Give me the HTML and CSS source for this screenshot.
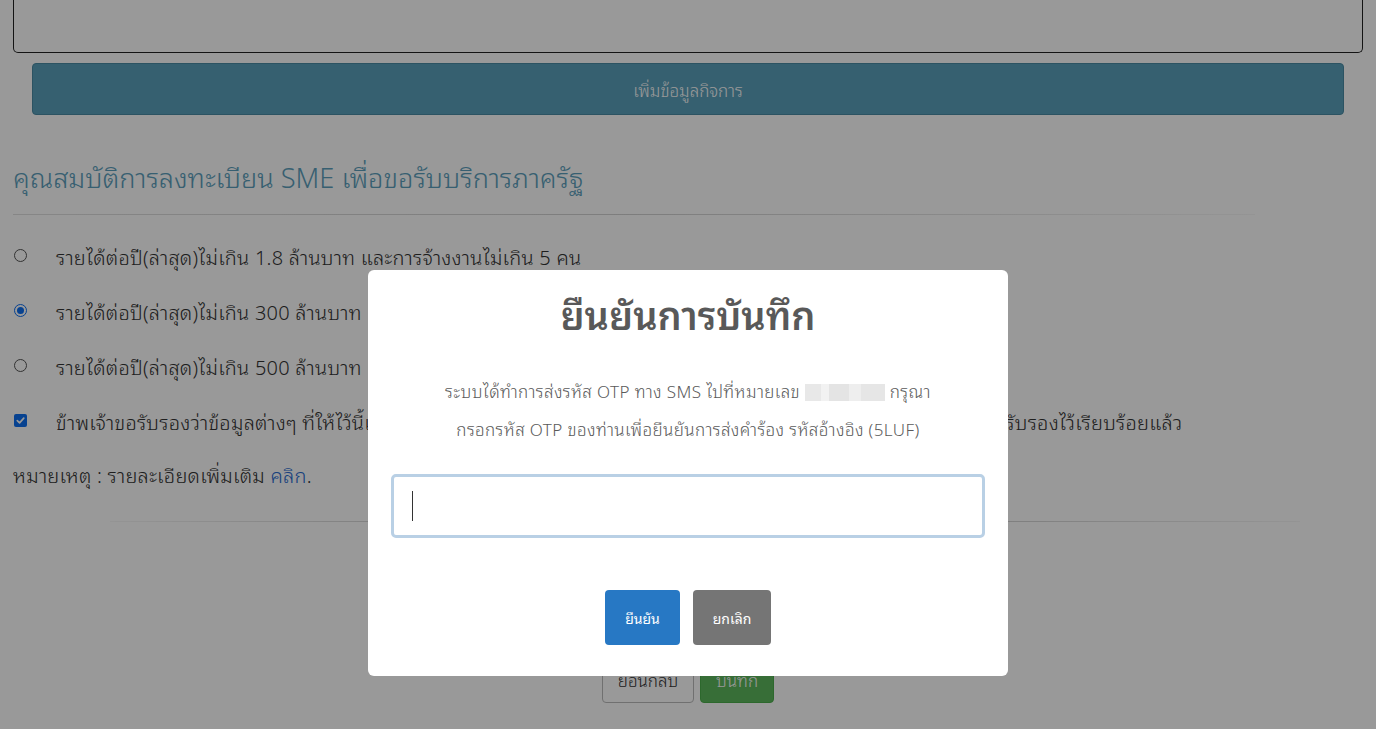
FILE: index.html
```html
<!DOCTYPE html>
<html lang="th">
<head>
<meta charset="utf-8">
<title>SME</title>
<link rel="stylesheet" href="styles.css">
</head>
<body>
<div class="page">
  <div class="textbox"></div>
  <div class="add-wrap"><button class="btn-add">เพิ่มข้อมูลกิจการ</button></div>
  <h3 class="section-title">คุณสมบัติการลงทะเบียน SME เพื่อขอรับบริการภาครัฐ</h3>
  <div class="hr hr1"></div>
  <ul class="options">
    <li class="opt"><span class="radio"></span><span class="opt-text">รายได้ต่อปี(ล่าสุด)ไม่เกิน 1.8 ล้านบาท และการจ้างงานไม่เกิน 5 คน</span></li>
    <li class="opt"><span class="radio checked"></span><span class="opt-text">รายได้ต่อปี(ล่าสุด)ไม่เกิน 300 ล้านบาท</span></li>
    <li class="opt"><span class="radio"></span><span class="opt-text">รายได้ต่อปี(ล่าสุด)ไม่เกิน 500 ล้านบาท</span></li>
    <li class="opt"><span class="checkbox"><svg viewBox="0 0 12 12" width="11" height="11"><path d="M2.5 6.2 L5 8.6 L9.6 3.4" fill="none" stroke="#fff" stroke-width="1.8" stroke-linecap="round" stroke-linejoin="round"/></svg></span><span class="opt-text">ข้าพเจ้าขอรับรองว่าข้อมูลต่างๆ ที่ให้ไว้นี้เป็นความจริงทุกประการ และได้แนบเอกสารหลักฐานประกอบการพิจารณาตามการรับรองไว้เรียบร้อยแล้ว</span></li>
  </ul>
  <p class="note">หมายเหตุ : รายละเอียดเพิ่มเติม <a class="link">คลิก</a>.</p>
  <div class="hr hr2"></div>
  <div class="actions">
    <button class="btn-back">ย้อนกลับ</button>
    <button class="btn-save">บันทึก</button>
  </div>
</div>
<div class="overlay"></div>
<div class="modal">
  <h2 class="modal-title">ยืนยันการบันทึก</h2>
  <div class="modal-text">
    <p>ระบบได้ทำการส่งรหัส OTP ทาง SMS ไปที่หมายเลข <span class="blur"></span> กรุณา</p>
    <p>กรอกรหัส OTP ของท่านเพื่อยืนยันการส่งคำร้อง รหัสอ้างอิง (5LUF)</p>
  </div>
  <div class="otp"><span class="caret"></span></div>
  <div class="modal-actions">
    <button class="btn-confirm">ยืนยัน</button>
    <button class="btn-cancel">ยกเลิก</button>
  </div>
</div>
</body>
</html>
```
FILE: styles.css
```css
* { box-sizing: border-box; }
html, body { margin: 0; padding: 0; }
body {
  font-family: "Noto Sans", "Open Sans", "Noto Sans Thai Looped", sans-serif;
  background: #fff;
  color: #333;
  width: 1376px;
  height: 729px;
  overflow: hidden;
}
.page {
  padding: 0 13px;
}
.textbox {
  height: 53px;
  border: 1px solid #222;
  border-top: 0;
  border-radius: 0 0 5px 5px;
}
.add-wrap {
  padding: 10px 19px 0;
}
.btn-add {
  display: block;
  width: 100%;
  height: 52px;
  background: #5aa0bb;
  border: 1px solid #4a8aa3;
  border-radius: 4px;
  color: #fff;
  font-family: inherit;
  font-size: 17px;
  font-weight: 300;
}
.section-title {
  margin: 42px 0 0;
  font-size: 27.2px;
  font-weight: 300;
  color: #5d9fbd;
  line-height: 42px;
}
.hr {
  height: 1px;
}
.hr1 {
  margin-top: 15px;
  margin-right: 108px;
  background: linear-gradient(to right, rgba(0,0,0,0.12), rgba(0,0,0,0.18) 50%, rgba(0,0,0,0.03));
}
.options {
  list-style: none;
  margin: 13px 0 0;
  padding: 0;
}
.opt {
  display: flex;
  align-items: center;
  height: 55px;
  font-size: 20px;
  letter-spacing: 0.25px;
  font-weight: 300;
  color: #333;
  white-space: nowrap;
}
.radio {
  width: 13px;
  height: 13px;
  border-radius: 50%;
  border: 1px solid #555;
  margin-left: 1px;
  margin-right: 29px;
  flex: none;
  display: flex;
  align-items: center;
  justify-content: center;
}
.radio.checked {
  border: 1.5px solid #0c6ef0;
}
.radio.checked::after {
  content: "";
  width: 7px;
  height: 7px;
  border-radius: 50%;
  background: #0c6ef0;
}
.checkbox {
  width: 13px;
  height: 13px;
  border-radius: 2px;
  background: #0c6ef0;
  margin-left: 1px;
  margin-right: 29px;
  flex: none;
  display: flex;
  align-items: center;
  justify-content: center;
}
.checkbox svg { display: block; }
.note {
  margin: 0;
  height: 56px;
  line-height: 56px;
  font-size: 20px;
  letter-spacing: 0.25px;
  font-weight: 300;
  color: #333;
}
.link { color: #2a6bd1; }
.hr2 {
  margin: 17px 63px 0 97px;
  background: linear-gradient(to right, rgba(0,0,0,0.03), rgba(0,0,0,0.2) 30%, rgba(0,0,0,0.2) 70%, rgba(0,0,0,0.03));
}
.actions {
  display: flex;
  justify-content: center;
  gap: 6px;
  padding-top: 134px;
}
.actions button {
  height: 47px;
  font-family: inherit;
  font-size: 17px;
  font-weight: 300;
  border-radius: 4px;
}
.btn-back {
  width: 92px;
  background: #fff;
  border: 1px solid #bbb;
  color: #333;
}
.btn-save {
  width: 74px;
  background: #5cb85c;
  border: 1px solid #4cae4c;
  color: #fff;
}
.overlay {
  position: fixed;
  inset: 0;
  background: rgba(0,0,0,0.4);
}
.modal {
  position: fixed;
  left: 368px;
  top: 270px;
  width: 640px;
  height: 406px;
  background: #fff;
  border-radius: 6px;
  padding: 20px 23px 0;
  text-align: center;
}
.modal-title {
  margin: 0;
  font-size: 38px;
  font-weight: 600;
  color: #595959;
  line-height: 50px;
}
.modal-text {
  margin-top: 33px;
  color: #5a5a5a;
  font-size: 17px;
  letter-spacing: 0.4px;
  font-weight: 300;
}
.modal-text p {
  margin: 0;
  line-height: 38px;
}
.blur {
  display: inline-block;
  width: 80px;
  height: 17px;
  vertical-align: -3px;
  background: linear-gradient(to right, #e8e8e8 0 20%, #f2f2f2 20% 30%, #e4e4e4 30% 55%, #eeeeee 55% 70%, #e6e6e6 70% 100%);
}
.otp {
  margin-top: 25px;
  height: 64px;
  border: 3px solid #b9d0e5;
  border-radius: 5px;
  padding-left: 18px;
  display: flex;
  align-items: center;
}
.caret {
  width: 1px;
  height: 30px;
  background: #333;
}
.modal-actions {
  margin-top: 52px;
  display: flex;
  justify-content: center;
  gap: 13px;
}
.modal-actions button {
  height: 55px;
  border: 0;
  border-radius: 4px;
  color: #fff;
  font-family: inherit;
  font-size: 14px;
  font-weight: 400;
}
.btn-confirm {
  width: 75px;
  background: #2778c4;
}
.btn-cancel {
  width: 78px;
  background: #757575;
}
```
